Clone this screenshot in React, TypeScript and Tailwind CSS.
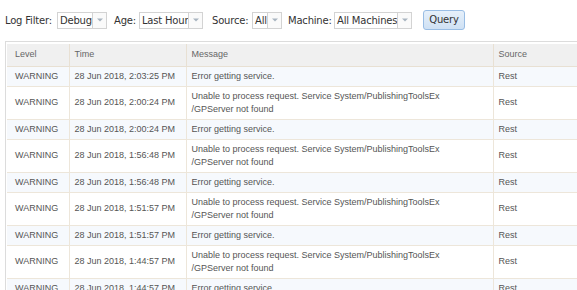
import React from "react";

const SINGLE = "Error getting service.";

const rows: { time: string; dbl: boolean }[] = [
  { time: "28 Jun 2018, 2:03:25 PM", dbl: false },
  { time: "28 Jun 2018, 2:00:24 PM", dbl: true },
  { time: "28 Jun 2018, 2:00:24 PM", dbl: false },
  { time: "28 Jun 2018, 1:56:48 PM", dbl: true },
  { time: "28 Jun 2018, 1:56:48 PM", dbl: false },
  { time: "28 Jun 2018, 1:51:57 PM", dbl: true },
  { time: "28 Jun 2018, 1:51:57 PM", dbl: false },
  { time: "28 Jun 2018, 1:44:57 PM", dbl: true },
  { time: "28 Jun 2018, 1:44:57 PM", dbl: false },
];

function Select({ label, width }: { label: string; width: string }) {
  return (
    <div className={`flex h-[17px] shrink-0 items-stretch border border-[#d3d3d3] bg-white ${width}`}>
      <div className="flex-1 overflow-hidden whitespace-nowrap pl-[2px] leading-[15px] text-[#333]">{label}</div>
      <div className="flex w-[14px] items-center justify-center border-l border-[#d3d3d3] bg-[#fafafa]">
        <svg width="6" height="4" viewBox="0 0 6 4">
          <path d="M0 0.5 L6 0.5 L3 3.5 Z" fill="#a8b4c0" />
        </svg>
      </div>
    </div>
  );
}

export default function App() {
  const toolbarFont = { fontFamily: '"DejaVu Sans", Verdana, sans-serif' };
  return (
    <div className="relative h-[290px] w-[577px] overflow-hidden bg-white">
      <div
        className="mt-[10px] flex h-[20px] items-center pl-[5px] text-[10px] tracking-[-0.2px] text-[#333]"
        style={toolbarFont}
      >
        <span className="w-[52px] shrink-0 whitespace-nowrap">Log Filter:</span>
        <Select label="Debug" width="w-[50px]" />
        <span className="ml-[7px] w-[25px] shrink-0 whitespace-nowrap">Age:</span>
        <Select label="Last Hour" width="w-[64px]" />
        <span className="ml-[9px] w-[40px] shrink-0 whitespace-nowrap">Source:</span>
        <Select label="All" width="w-[30px]" />
        <span className="ml-[6px] w-[46px] shrink-0 whitespace-nowrap">Machine:</span>
        <Select label="All Machines" width="w-[78px]" />
        <button className="ml-[11px] h-[20px] w-[42px] shrink-0 rounded-[3px] border border-[#99bde4] bg-gradient-to-b from-[#e6f0fa] to-[#cfe1f4] text-[10px] leading-[18px] text-[#333]">
          Query
        </button>
      </div>

      <div
        className="ml-[5px] mt-[11px] w-[590px] border-l border-t border-[#dcdcdc] pl-[1px] pt-[2px]"
        style={{ fontFamily: '"Liberation Sans", Arial, sans-serif' }}
      >
        <table className="w-[590px] table-fixed border-collapse text-[9px] leading-[13px] text-[#555]">
          <colgroup>
            <col className="w-[62px]" />
            <col className="w-[117px]" />
            <col className="w-[307px]" />
            <col className="w-[104px]" />
          </colgroup>
          <thead>
            <tr className="bg-[#f0f0f0] text-[#666]">
              <th className="h-[22px] border-b border-r border-[#e8e0d3] pl-[8px] text-left align-middle font-normal">Level</th>
              <th className="border-b border-r border-[#e8e0d3] pl-[5px] text-left align-middle font-normal">Time</th>
              <th className="border-b border-r border-[#e8e0d3] pl-[5px] text-left align-middle font-normal">Message</th>
              <th className="border-b border-[#e8e0d3] pl-[5px] text-left align-middle font-normal">Source</th>
            </tr>
          </thead>
          <tbody>
            {rows.map((r, i) => (
              <tr key={i} className={i % 2 === 0 ? "bg-[#f6f9fd]" : "bg-white"}>
                <td className="border-b border-r border-[#ede6da] py-[3px] pl-[8px] align-middle">WARNING</td>
                <td className="whitespace-nowrap border-b border-r border-[#ede6da] py-[3px] pl-[5px] align-middle">{r.time}</td>
                <td className="border-b border-r border-[#ede6da] py-[3px] pl-[5px] align-middle">
                  {r.dbl ? (
                    <>
                      Unable to process request. Service System/PublishingToolsEx
                      <br />
                      /GPServer not found
                    </>
                  ) : (
                    SINGLE
                  )}
                </td>
                <td className="border-b border-[#ede6da] py-[3px] pl-[5px] align-middle">Rest</td>
              </tr>
            ))}
          </tbody>
        </table>
      </div>
    </div>
  );
}
